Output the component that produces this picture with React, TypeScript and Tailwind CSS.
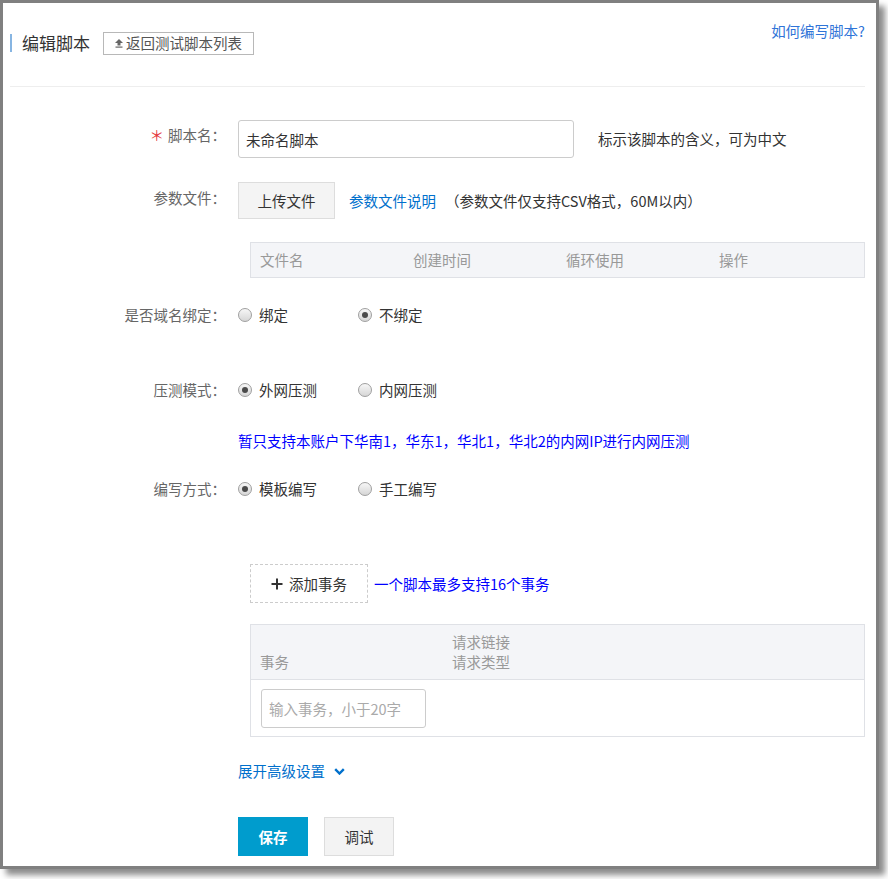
import React from "react";

const font = { fontFamily: '"Noto Sans CJK SC", "Liberation Sans", sans-serif' };

const Radio = ({ checked, text }: { checked?: boolean; text: string }) => (
  <div className="flex w-[120px] items-center">
    <span className="flex h-[14px] w-[14px] shrink-0 items-center justify-center rounded-full border border-[#9f9f9f] bg-gradient-to-b from-[#f7f7f7] to-[#d6d6d6]">
      {checked && <span className="h-[6px] w-[6px] rounded-full bg-[#4a4a4a]" />}
    </span>
    <span className="ml-[7px] leading-[20px] text-[#333]">{text}</span>
  </div>
);

const RadioRow = ({ label, options, value, className }: { label: string; options: string[]; value: number; className: string }) => (
  <div className={`flex h-[20px] items-center ${className}`}>
    <div className="w-[216px] text-right leading-[20px] text-[#666]">{label}</div>
    <div className="ml-[12px] flex">
      {options.map((o, i) => (
        <Radio key={o} text={o} checked={i === value} />
      ))}
    </div>
  </div>
);

export default function App() {
  return (
    <div className="h-[879px] w-[888px] bg-white text-[14.5px]" style={font}>
      <div className="box-border h-[869px] w-[879px] border-[3px] border-[#808080] bg-white pl-[7px] pr-[11px] shadow-[6px_6px_6px_rgba(0,0,0,0.45)]">
        {/* header */}
        <div className="box-border flex h-[84px] justify-between border-b border-[#eeeeee]">
          <div className="mt-[28px] flex h-[24px] items-center">
            <span className="h-[18px] w-[2px] bg-[#87b5e2]" />
            <span className="ml-[10px] text-[17px] leading-[24px] text-[#333]">编辑脚本</span>
            <button className="ml-[13px] flex h-[23px] w-[151px] items-center justify-center border border-[#b8b8b8] bg-white text-[#555]">
              <svg width="8" height="9" viewBox="0 0 8 9" className="mr-[3px]">
                <polygon points="4,0 8,4 0,4" fill="#666" />
                <rect x="2.5" y="4" width="3" height="2.5" fill="#666" />
                <rect x="0.5" y="7.5" width="7" height="1.2" fill="#666" />
              </svg>
              <span className="leading-[20px]">返回测试脚本列表</span>
            </button>
          </div>
          <a className="mt-[18px] self-start leading-[20px] text-[#2f74d8]">如何编写脚本?</a>
        </div>

        {/* 脚本名 */}
        <div className="mt-[33px] flex items-start">
          <div className="w-[216px] pt-[5px] text-right leading-[20px] text-[#666]">
            <span className="mr-[4px] text-[#e4393c]">＊</span>脚本名：
          </div>
          <div className="ml-[12px] flex items-center">
            <input
              defaultValue="未命名脚本"
              className="box-border h-[38px] w-[336px] rounded-[3px] border border-[#cccccc] pl-[7px] text-[#333] outline-none"
            />
            <span className="ml-[24px] leading-[20px] text-[#333]">标示该脚本的含义，可为中文</span>
          </div>
        </div>

        {/* 参数文件 */}
        <div className="mt-[24px] flex items-start">
          <div className="w-[216px] pt-[6px] text-right leading-[20px] text-[#666]">参数文件：</div>
          <div className="ml-[12px] flex items-center">
            <button className="box-border h-[37px] w-[97px] border border-[#dddddd] bg-[#f4f4f4] text-[#333]">上传文件</button>
            <a className="ml-[14px] leading-[20px] text-[#0070cc]">参数文件说明</a>
            <span className="ml-[9px] leading-[20px] text-[#333]">（参数文件仅支持CSV格式，60M以内）</span>
          </div>
        </div>

        <div className="ml-[240px] mt-[23px] box-border flex h-[36px] items-center border border-[#dfe1e6] bg-[#f4f5f8] text-[#999]">
          {["文件名", "创建时间", "循环使用", "操作"].map((c) => (
            <div key={c} className="w-[153px] pl-[9px] leading-[20px]">
              {c}
            </div>
          ))}
        </div>

        <RadioRow className="mt-[27px]" label="是否域名绑定：" options={["绑定", "不绑定"]} value={1} />
        <RadioRow className="mt-[55px]" label="压测模式：" options={["外网压测", "内网压测"]} value={0} />

        <div className="ml-[228px] mt-[31px] leading-[20px] text-[#0000ff]">
          暂只支持本账户下华南1，华东1，华北1，华北2的内网IP进行内网压测
        </div>

        <RadioRow className="mt-[28px]" label="编写方式：" options={["模板编写", "手工编写"]} value={0} />

        {/* 事务 */}
        <div className="ml-[240px] mt-[65px] flex items-center">
          <button className="box-border flex h-[39px] w-[118px] items-center justify-center border border-dashed border-[#cccccc] bg-white text-[#333]">
            <svg width="12" height="12" viewBox="0 0 12 12" className="mr-[6px]">
              <path d="M6 0.5V11.5M0.5 6H11.5" stroke="#333" strokeWidth="2" />
            </svg>
            <span className="leading-[20px]">添加事务</span>
          </button>
          <span className="ml-[6px] leading-[20px] text-[#0000ff]">一个脚本最多支持16个事务</span>
        </div>

        <div className="ml-[240px] mt-[21px] border border-[#dfe1e6]">
          <div className="flex items-end border-b border-[#dfe1e6] bg-[#f4f5f8] py-[7px] leading-[20px] text-[#999]">
            <div className="w-[201px] pl-[9px]">事务</div>
            <div>
              <div>请求链接</div>
              <div>请求类型</div>
            </div>
          </div>
          <div className="pb-[8px] pl-[10px] pt-[9px]">
            <input
              placeholder="输入事务，小于20字"
              className="box-border h-[39px] w-[165px] rounded-[3px] border border-[#cccccc] pl-[7px] text-[#333] outline-none placeholder:text-[#aaa]"
            />
          </div>
        </div>

        <div className="ml-[228px] mt-[24px] flex items-center leading-[20px] text-[#0070cc]">
          <span>展开高级设置</span>
          <svg width="11" height="7" viewBox="0 0 11 7" className="ml-[9px]">
            <path d="M1.2 1.2L5.5 5.5L9.8 1.2" fill="none" stroke="#0070cc" strokeWidth="2.4" />
          </svg>
        </div>

        <div className="ml-[228px] mt-[36px] flex gap-[16px]">
          <button className="h-[39px] w-[70px] bg-[#009ccd] font-bold text-white">保存</button>
          <button className="box-border h-[39px] w-[70px] border border-[#dddddd] bg-[#f3f3f3] text-[#333]">调试</button>
        </div>
      </div>
    </div>
  );
}
